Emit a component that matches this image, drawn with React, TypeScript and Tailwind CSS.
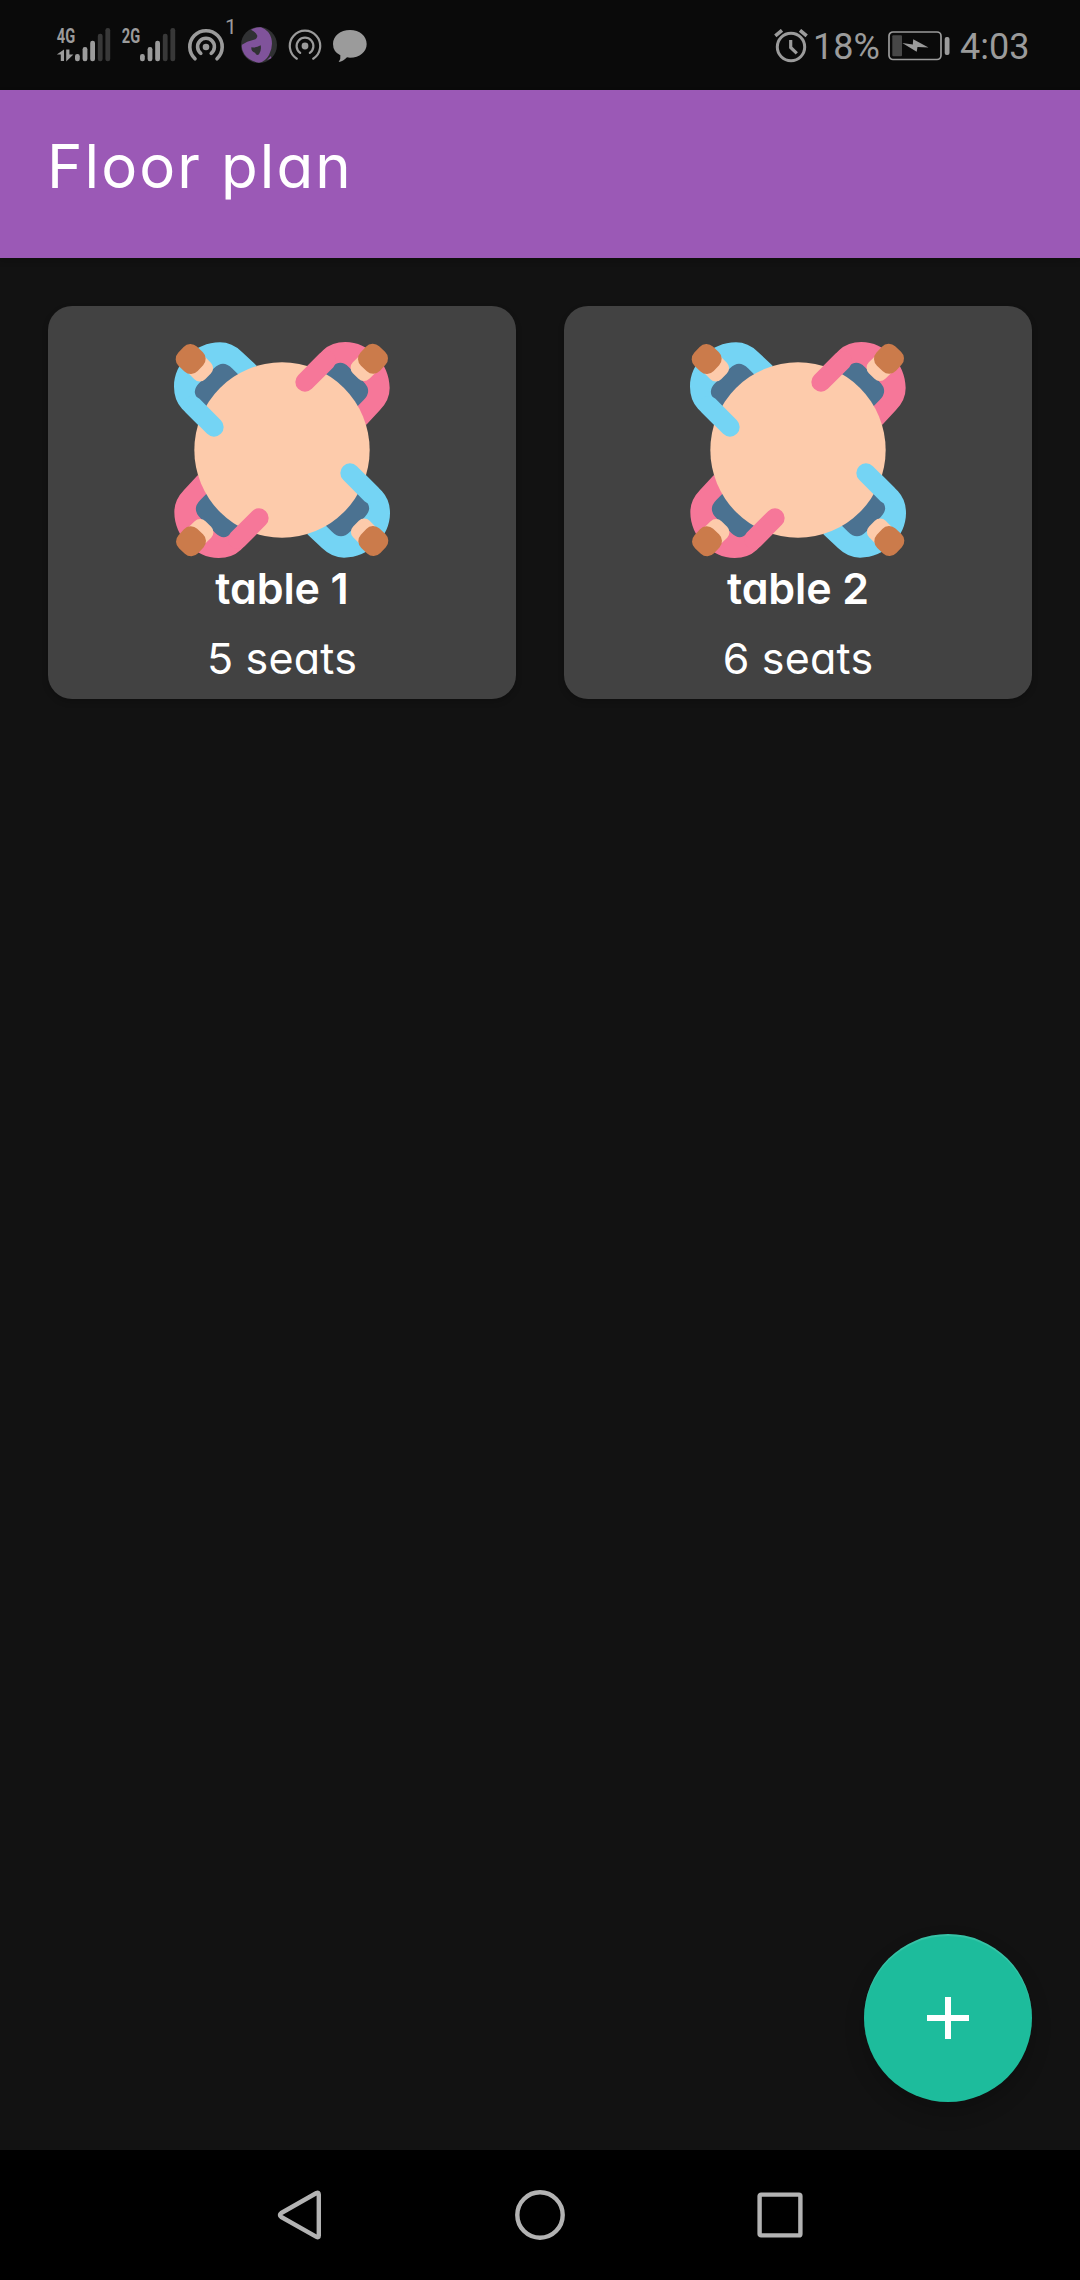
import React from "react";

const GREY = "#9b9b9b";

function Signal({ label, data }: { label: string; data?: boolean }) {
  const tops = [54, 47, 40.7, 33.7, 28];
  return (
    <svg viewBox="56 18 56 50" className="h-[50px] w-[56px] shrink-0 overflow-visible">
      <text
        x={56.8}
        y={43}
        fontSize={21}
        fontWeight={700}
        textLength={18.4}
        lengthAdjust="spacingAndGlyphs"
        fill={GREY}
        fontFamily="Roboto, sans-serif"
      >
        {label}
      </text>
      {data && (
        <path d="M64 49.5V61H60.8V54.5H56.8ZM66.2 49.5H69.4V54.5H73.4L66.2 61.5Z" fill={GREY} />
      )}
      {tops.map((t, i) => (
        <rect
          key={t}
          x={75 + i * 7.6}
          y={t}
          width={4.8}
          height={61.2 - t}
          rx={2.2}
          fill={i < 3 ? GREY : "#383838"}
        />
      ))}
    </svg>
  );
}

function Hotspot({ bold }: { bold?: boolean }) {
  return bold ? (
    <svg viewBox="-19 -19 38 38" className="h-[38px] w-[38px] shrink-0" fill="none" stroke={GREY} strokeWidth={3.6} strokeLinecap="round">
      <path d="M-11 11.8A16.2 16.2 0 1 1 11 11.8" />
      <path d="M-5.2 6.3A8.4 8.4 0 1 1 5.2 6.3" />
      <circle r={3.3} fill={GREY} stroke="none" />
    </svg>
  ) : (
    <svg viewBox="-17 -17 34 34" className="h-[34px] w-[34px] shrink-0" fill="none" stroke={GREY} strokeWidth={2.2} strokeLinecap="round">
      <path d="M-8.2 12.7A15.2 15.2 0 1 1 8.2 12.7" />
      <path d="M-4.8 6.9A8.4 8.4 0 1 1 4.8 6.9" />
      <circle r={3.4} fill={GREY} stroke="none" />
    </svg>
  );
}

function AppBadge() {
  return (
    <svg viewBox="0 0 108 108" className="h-[36px] w-[36px] shrink-0">
      <circle cx="54" cy="54" r="54" fill="#303133" />
      <path
        d="M30 8Q44 0 60 1Q84 10 91 34Q97 60 84 84Q72 105 54 107Q25 103 10 82Q0 66 3 53Q18 42 36 39Q49 36 49 26Q45 15 30 8Z"
        fill="#80539b"
      />
      <path d="M31 61Q46 63 59 55Q62 70 54 82Q47 87 42 77Q30 74 31 61Z" fill="#303133" />
      <path d="M78 99L90 87L91 94Z" fill="#80539b" />
    </svg>
  );
}

function StatusBar() {
  return (
    <div className="flex h-[90px] shrink-0 items-start bg-[#0a0a0a] font-[Roboto,sans-serif] text-[#9b9b9b]">
      <div className="ml-[56px] mt-[18px]"><Signal label="4G" data /></div>
      <div className="ml-[9px] mt-[18px]"><Signal label="2G" /></div>
      <div className="ml-[10px] mt-[28px]"><Hotspot bold /></div>
      <span className="mt-[16px] w-[12px] text-[21px] leading-[23px]">1</span>
      <div className="ml-[4px] mt-[27px]"><AppBadge /></div>
      <div className="ml-[11px] mt-[29px]"><Hotspot /></div>
      <svg viewBox="0 0 102 96" className="ml-[11px] mt-[30px] h-[32px] w-[34px] shrink-0">
        <path d="M51 0C80 0 101 18 101 42S80 83 51 83L42 82Q31 94 17 96Q24 86 22 76Q0 65 0 42C0 18 22 0 51 0Z" fill={GREY} />
      </svg>
      <div className="ml-auto flex items-start">
        <svg viewBox="0 0 34 34" className="mt-[29px] h-[34px] w-[34px] shrink-0" fill="none" stroke={GREY} strokeWidth={3}>
          <circle cx="17" cy="18" r="13.7" />
          <path d="M16.7 11V18.5L22.8 24.4" strokeWidth={3.2} />
          <path d="M1.3 6.8L8 1.3M26 1.3L32.7 6.8" strokeWidth={3.6} />
        </svg>
        <span className="ml-[5px] mt-[25px] w-[75px] whitespace-nowrap text-[36px] leading-[44px]">18%</span>
        <svg viewBox="0 0 62 30" className="mt-[31px] h-[30px] w-[62px] shrink-0">
          <rect x="1" y="1" width="52" height="27.5" rx="4" fill="none" stroke={GREY} strokeWidth="1.7" />
          <rect x="4.3" y="4.2" width="9.7" height="21" rx="1" fill="#474747" />
          <path d="M14.3 12L24.8 13.5L25.2 8.2L40.5 16.5L29.5 16.1L28.7 20.8Z" fill={GREY} />
          <rect x="56.7" y="6" width="4.8" height="18" rx="2" fill={GREY} />
        </svg>
        <span className="ml-[10px] mr-[51px] mt-[25px] w-[69px] whitespace-nowrap text-[36px] leading-[44px]">4:03</span>
      </div>
    </div>
  );
}

const SEATS = [
  { angle: 0, color: "#74d4f4" },
  { angle: 90, color: "#f67799" },
  { angle: 180, color: "#74d4f4" },
  { angle: 270, color: "#f67799" },
];

function TableArt() {
  return (
    <svg viewBox="6 0 720 720" className="mt-[24px] h-[240px] w-[240px] shrink-0">
      {SEATS.map(({ angle, color }) => (
        <g key={angle} transform={`rotate(${angle} 366 360)`}>
          <path
            d="M290 107L246 66Q216 37 180 37C105 37 42 100 42 170Q42 210 66 236L141 311L240 240Z"
            fill={color}
          />
          <path
            d="M270 168L216 115Q189 88 162 115L117 160Q92 185 117 210L170 262Z"
            fill="#4b7291"
          />
          <rect x="-34" y="-35" width="68" height="70" rx="23" transform="translate(120 115) rotate(45)" fill="#fdcbab" />
          <rect x="-40" y="-40" width="80" height="80" rx="28" transform="translate(92 87) rotate(43)" fill="#cb7b4b" />
        </g>
      ))}
      <circle cx="366" cy="360" r="263" fill="#fdcbab" />
      {SEATS.map(({ angle, color }) => (
        <path
          key={angle}
          d="M98 227L162 291"
          stroke={color}
          strokeWidth="58"
          strokeLinecap="round"
          transform={`rotate(${angle} 366 360)`}
        />
      ))}
    </svg>
  );
}

function TableCard({ name, seats }: { name: string; seats: string }) {
  return (
    <div className="flex h-[393px] flex-1 flex-col items-center rounded-[24px] bg-[#424242] text-white shadow-[0_3px_6px_rgba(0,0,0,0.2)]">
      <TableArt />
      <div className="mt-[-12px] whitespace-nowrap text-[43px] font-semibold leading-[60px] tracking-[-0.1px]">{name}</div>
      <div className="mt-[10px] whitespace-nowrap text-[43px] leading-[60px] tracking-[0.2px]">{seats}</div>
    </div>
  );
}

export default function App() {
  return (
    <div className="flex h-[2280px] w-[1080px] flex-col overflow-hidden bg-[#121212] font-[Inter,sans-serif] [font-feature-settings:'cv11']">
      <StatusBar />
      <header className="h-[168px] shrink-0 bg-[#9b59b6] pl-[47px] pt-[36px] text-white shadow-[0_3px_6px_rgba(0,0,0,0.2)]">
        <h1 className="whitespace-nowrap text-[60px] font-normal leading-[80px] tracking-[2.1px]">Floor plan</h1>
      </header>
      <main className="flex flex-1 flex-col justify-between p-[48px]">
        <div className="flex gap-[48px]">
          <TableCard name="table 1" seats="5 seats" />
          <TableCard name="table 2" seats="6 seats" />
        </div>
        <button
          aria-label="Add table"
          className="flex h-[168px] w-[168px] items-center justify-center self-end rounded-full bg-[#1dbc9c] shadow-[0_10px_20px_rgba(0,0,0,0.2),inset_0_2px_1px_rgba(255,255,255,0.12)]"
        >
          <svg viewBox="0 0 42 42" className="h-[42px] w-[42px]" fill="#fff">
            <path d="M18 0H24V18H42V24H24V42H18V24H0V18H18Z" />
          </svg>
        </button>
      </main>
      <nav className="flex h-[130px] shrink-0 items-center justify-center gap-[190px] bg-black">
        <svg viewBox="0 0 50 50" className="h-[50px] w-[50px]" fill="none" stroke="#b3b3b3" strokeWidth="4.4" strokeLinejoin="round">
          <path d="M41.5 3Q43.8 2 43.8 4.5V45.5Q43.8 48 41.5 46.8L6.3 27Q3.6 25 6.3 23Z" />
        </svg>
        <svg viewBox="0 0 50 50" className="h-[50px] w-[50px]" fill="none" stroke="#b3b3b3" strokeWidth="4.4">
          <circle cx="25" cy="25" r="22.7" />
        </svg>
        <svg viewBox="0 0 50 50" className="h-[50px] w-[50px]" fill="none" stroke="#b3b3b3" strokeWidth="4.4">
          <rect x="4.6" y="4.6" width="40.8" height="40.8" rx="1.5" />
        </svg>
      </nav>
    </div>
  );
}
